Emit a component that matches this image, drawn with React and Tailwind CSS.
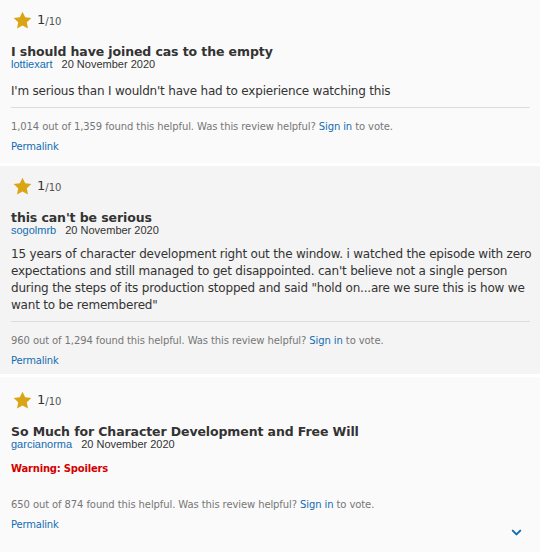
import { ChevronDown } from "lucide-react";

const reviews = [
  {
    id: 1,
    title: "I should have joined cas to the empty",
    user: "lottiexart",
    date: "20 November 2020",
    body: ["I'm serious than I wouldn't have had to expierience watching this"],
    found: "1,014",
    total: "1,359",
    box: "bg-[#fafafa] pt-[11px] pb-[10px]",
    bodyMt: "mt-[13px]",
  },
  {
    id: 2,
    title: "this can't be serious",
    user: "sogolmrb",
    date: "20 November 2020",
    body: [
      "15 years of character development right out the window. i watched the episode with zero expectations and still managed to get disappointed. can't believe not a single person during the steps of its production stopped and said \"hold on...are we sure this is how we want to be remembered\"",
    ],
    found: "960",
    total: "1,294",
    box: "bg-[#f4f4f4] pt-[11px] pb-[7px]",
    bodyMt: "mt-[10px]",
  },
  {
    id: 3,
    title: "So Much for Character Development and Free Will",
    user: "garcianorma",
    date: "20 November 2020",
    spoiler: true,
    found: "650",
    total: "874",
    box: "bg-[#fafafa] pt-[14px] pb-[10px] flex-1",
  },
];

function Star() {
  return (
    <svg width="19" height="18" viewBox="0 0 24 23" className="shrink-0">
      <path
        d="M12 0.8l3.4 7.2 7.9 1-5.8 5.5 1.5 7.8L12 18.5l-7 3.8 1.5-7.8L0.7 9l7.9-1z"
        fill="#d9a515"
      />
    </svg>
  );
}

function Review({ r }) {
  return (
    <div className={`${r.box} pl-[11px] pr-[2px]`}>
      <div className="flex items-center h-[18px] ml-[2px]">
        <Star />
        <span className="ml-[5px] text-[13px] text-[#333]">1</span>
        <span className="text-[10px] text-[#555] mt-[2px]">/10</span>
      </div>
      <div className="mt-[17px] text-[12.5px] tracking-[-0.1px] font-bold leading-[12px] text-[#333]">{r.title}</div>
      <div className="text-[11px] leading-[12px] font-['Liberation_Sans',Arial,sans-serif] text-[#333]">
        <a className="text-[#136cb2]">{r.user}</a>
        <span className="ml-[9px]">{r.date}</span>
      </div>
      {r.spoiler ? (
        <div className="mt-[12px] text-[10px] tracking-[-0.2px] font-bold leading-[13px] text-[#d40000]">Warning: Spoilers</div>
      ) : (
        <div className={`${r.bodyMt} text-[12px] tracking-[-0.2px] leading-[17px] text-[#333] pb-[7px] border-b border-[#dcdcdc] mr-[8px]`}>
          {r.body.map((p, i) => (
            <p key={i} className="-mr-[8px]">{p}</p>
          ))}
        </div>
      )}
      <div className={`${r.spoiler ? "mt-[23px]" : "mt-[12px]"} text-[10px] tracking-[-0.1px] leading-[13px] text-[#777]`}>
        {r.found} out of {r.total} found this helpful. Was this review helpful?{" "}
        <a className="text-[#136cb2]">Sign in</a> to vote.
      </div>
      <div className="mt-[7px] flex items-start justify-between h-[13px]">
        <a className="text-[10px] tracking-[-0.2px] leading-[13px] text-[#136cb2]">Permalink</a>
        {r.spoiler && <ChevronDown size={15} strokeWidth={3.2} color="#136cb2" className="mr-[14px] mt-[7px]" />}
      </div>
    </div>
  );
}

export default function App() {
  return (
    <div className="w-[540px] h-[552px] overflow-hidden bg-white font-['DejaVu_Sans',Verdana,sans-serif] flex flex-col gap-[3px]">
      {reviews.map(r => (
        <Review key={r.id} r={r} />
      ))}
    </div>
  );
}
